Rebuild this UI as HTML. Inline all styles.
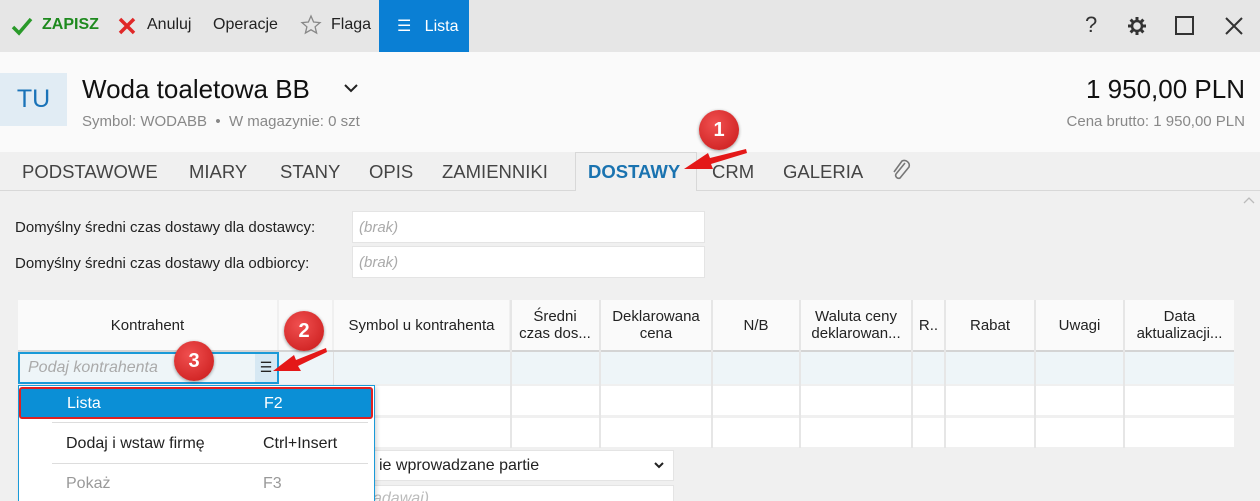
<!DOCTYPE html>
<html><head><meta charset="utf-8"><style>
*{box-sizing:border-box;margin:0;padding:0}
html{width:1260px;height:501px;overflow:hidden}
body{width:1260px;height:501px;overflow:hidden;background:#f0f0f0;font-family:"Liberation Sans",sans-serif;position:relative;color:#222}
.a{position:absolute}
.top{left:0;top:0;width:1260px;height:52px;background:#e6e6e6}
.t{font-size:16px;top:16px}
.hdr{left:0;top:52px;width:1260px;height:100px;background:#fafafa}
.tab{font-size:18.5px;top:161px;color:#444}
.cell{position:absolute;background:#fff}
.hc{position:absolute;background:#fafafa;font-size:15px;text-align:center;display:flex;align-items:center;justify-content:center;line-height:17px;top:300px;height:50px}
.badge{position:absolute;width:40px;height:40px;border-radius:50%;background:radial-gradient(circle at 40% 35%,#f05050,#c81818);color:#fff;font-size:20px;display:flex;align-items:center;justify-content:center;box-shadow:0 1px 3px rgba(0,0,0,.4);font-weight:bold}
</style></head><body>
<div class="a top"></div>
<svg class="a" style="left:10px;top:15px" width="24" height="22"><path d="M3 12l6 6L21 4" stroke="#2a9a2a" stroke-width="3.5" fill="none"/></svg>
<div class="a t" style="left:42px;color:#1e8a1e;font-weight:bold">ZAPISZ</div>
<svg class="a" style="left:117px;top:16px" width="20" height="20"><path d="M3 3L17 17M17 3L3 17" stroke="#e02828" stroke-width="3.5"/></svg>
<div class="a t" style="left:147px">Anuluj</div>
<div class="a t" style="left:213px">Operacje</div>
<svg class="a" style="left:300px;top:14px" width="22" height="22"><path d="M11 2l2.6 6 6.4.6-4.9 4.2 1.5 6.3L11 15.8 5.4 19.1l1.5-6.3L2 8.6 8.4 8z" stroke="#888" stroke-width="1.3" fill="none"/></svg>
<div class="a t" style="left:331px">Flaga</div>
<div class="a" style="left:379px;top:0;width:90px;height:52px;background:#0a7fd4"></div>
<div class="a t" style="left:397px;color:#fff">☰&nbsp;&nbsp;&nbsp;Lista</div>
<div class="a" style="left:1085px;top:12px;font-size:22px;color:#333">?</div>
<svg class="a" style="left:1126px;top:15px" width="22" height="22"><g stroke="#333" stroke-width="3"><path d="M11 2v4M11 16v4M2 11h4M16 11h4M4.6 4.6l2.8 2.8M14.6 14.6l2.8 2.8M4.6 17.4l2.8-2.8M14.6 7.4l2.8-2.8"/></g><circle cx="11" cy="11" r="5" stroke="#333" stroke-width="2.5" fill="none"/></svg>
<div class="a" style="left:1175px;top:16px;width:19px;height:19px;border:2px solid #333"></div>
<svg class="a" style="left:1224px;top:16px" width="20" height="20"><path d="M2 2L18 18M18 2L2 18" stroke="#333" stroke-width="2"/></svg>

<div class="a hdr"></div>
<div class="a" style="left:0;top:73px;width:67px;height:53px;background:#e1ecf4;color:#1a73b8;font-size:25px;display:flex;align-items:center;justify-content:center">TU</div>
<div class="a" style="left:82px;top:74px;font-size:26px;color:#111">Woda toaletowa BB</div>
<svg class="a" style="left:343px;top:82px" width="16" height="12"><path d="M2 3l6 6 6-6" stroke="#222" stroke-width="2" fill="none"/></svg>
<div class="a" style="left:82px;top:113px;font-size:15px;color:#888">Symbol: WODABB &nbsp;•&nbsp; W magazynie: 0 szt</div>
<div class="a" style="right:15px;top:74px;font-size:26px;color:#111">1 950,00 PLN</div>
<div class="a" style="right:15px;top:113px;font-size:15px;color:#888">Cena brutto: 1 950,00 PLN</div>

<div class="a" style="left:0;top:190px;width:1260px;height:1px;background:#d8d8d8"></div>
<div class="a" style="left:575px;top:152px;width:122px;height:39px;background:#f0f0f0;border:1px solid #d8d8d8;border-bottom:none"></div>
<div class="a tab" style="left:22px">PODSTAWOWE</div>
<div class="a tab" style="left:189px">MIARY</div>
<div class="a tab" style="left:280px">STANY</div>
<div class="a tab" style="left:369px">OPIS</div>
<div class="a tab" style="left:442px">ZAMIENNIKI</div>
<div class="a tab" style="left:588px;color:#1a73b0;font-weight:bold">DOSTAWY</div>
<div class="a tab" style="left:712px">CRM</div>
<div class="a tab" style="left:783px">GALERIA</div>
<svg class="a" style="left:888px;top:158px" width="26" height="26"><path d="M17 5L8 16a3 3 0 0 0 4 4l9-11a5 5 0 0 0-7-6L6 14" stroke="#777" stroke-width="1.6" fill="none"/></svg>
<svg class="a" style="left:1242px;top:196px" width="14" height="10"><path d="M2 7l5-5 5 5" stroke="#bbb" stroke-width="1.3" fill="none"/></svg>

<div class="a" style="left:15px;top:219px;font-size:15px">Domyślny średni czas dostawy dla dostawcy:</div>
<div class="a" style="left:352px;top:211px;width:353px;height:32px;background:#fff;border:1px solid #e4e4e4;padding:7px 6px;font-size:15px;color:#aaa;font-style:italic">(brak)</div>
<div class="a" style="left:15px;top:255px;font-size:15px">Domyślny średni czas dostawy dla odbiorcy:</div>
<div class="a" style="left:352px;top:246px;width:353px;height:32px;background:#fff;border:1px solid #e4e4e4;padding:7px 6px;font-size:15px;color:#aaa;font-style:italic">(brak)</div>

<div class="hc" style="left:18px;width:259px">Kontrahent</div>
<div class="hc" style="left:279px;width:53px;color:#999">Typ</div>
<div class="hc" style="left:334px;width:175px">Symbol u kontrahenta</div>
<div class="hc" style="left:511px;width:88px">Średni<br>czas dos...</div>
<div class="hc" style="left:601px;width:110px">Deklarowana<br>cena</div>
<div class="hc" style="left:713px;width:86px">N/B</div>
<div class="hc" style="left:801px;width:110px">Waluta ceny<br>deklarowan...</div>
<div class="hc" style="left:913px;width:31px">R..</div>
<div class="hc" style="left:946px;width:88px">Rabat</div>
<div class="hc" style="left:1036px;width:87px">Uwagi</div>
<div class="hc" style="left:1125px;width:109px">Data<br>aktualizacji...</div>
<div class="a" style="left:18px;top:350px;width:1216px;height:2px;background:#d4d4d4"></div>
<div class="a" style="left:18px;top:352px;width:1216px;height:32px;background:#eef5f8"></div>
<div class="a" style="left:333px;top:352px;width:1px;height:96px;background:#e0e0e0"></div>
<div class="cell" style="left:333px;top:386px;width:901px;height:29px"></div>
<div class="cell" style="left:333px;top:418px;width:901px;height:29px"></div>
<div class="a" style="left:510px;top:300px;width:2px;height:148px;background:#e6e6e6"></div>
<div class="a" style="left:599px;top:300px;width:2px;height:148px;background:#e6e6e6"></div>
<div class="a" style="left:711px;top:300px;width:2px;height:148px;background:#e6e6e6"></div>
<div class="a" style="left:799px;top:300px;width:2px;height:148px;background:#e6e6e6"></div>
<div class="a" style="left:911px;top:300px;width:2px;height:148px;background:#e6e6e6"></div>
<div class="a" style="left:944px;top:300px;width:2px;height:148px;background:#e6e6e6"></div>
<div class="a" style="left:1034px;top:300px;width:2px;height:148px;background:#e6e6e6"></div>
<div class="a" style="left:1123px;top:300px;width:2px;height:148px;background:#e6e6e6"></div>

<div class="a" style="left:18px;top:352px;width:261px;height:32px;border:2px solid #1a9ad8;background:#eef5f8;padding:5px 8px;font-size:16px;color:#aaa;font-style:italic">Podaj kontrahenta</div>
<div class="a" style="left:255px;top:354px;width:22px;height:28px;background:#d6e8f3;font-size:14px;text-align:center;padding-top:5px">☰</div>

<div class="a" style="left:368px;top:450px;width:306px;height:31px;background:#fff;border:1px solid #e4e4e4;font-size:16px;padding:6px 0 0 10px">ie wprowadzane partie</div>
<svg class="a" style="left:653px;top:461px" width="12" height="9"><path d="M2 2l4 4 4-4" stroke="#222" stroke-width="2" fill="none"/></svg>
<div class="a" style="left:368px;top:485px;width:306px;height:31px;background:#fff;border:1px solid #e4e4e4;font-size:16px;padding:4px 0 0 4px;color:#bbb;font-style:italic">adawaj)</div>

<div class="a" style="left:18px;top:385px;width:357px;height:130px;background:#fff;border:1px solid #1a9ad8;box-shadow:2px 2px 4px rgba(0,0,0,.15)"></div>
<div class="a" style="left:19px;top:387px;width:354px;height:32px;background:#0b8fd6;border:2px solid #e02020;border-radius:3px;color:#fff;font-size:16px"><span class="a" style="left:46px;top:6px">Lista</span><span class="a" style="left:243px;top:6px">F2</span></div>
<div class="a" style="left:52px;top:422px;width:316px;height:1px;background:#ddd"></div>
<div class="a" style="left:66px;top:435px;font-size:16px">Dodaj i wstaw firmę</div>
<div class="a" style="left:263px;top:435px;font-size:16px">Ctrl+Insert</div>
<div class="a" style="left:52px;top:463px;width:316px;height:1px;background:#ddd"></div>
<div class="a" style="left:66px;top:475px;font-size:16px;color:#999">Pokaż</div>
<div class="a" style="left:263px;top:475px;font-size:16px;color:#999">F3</div>

<svg class="a" style="left:0;top:0" width="1260" height="501">
<path d="M746 149L710 158L708 153L684 169L713 169L711 164L747 153Z" fill="#e41818"/>
<path d="M326 348L296 360L294 355L273 371L301 371L298 366L327 352Z" fill="#e41818"/>
</svg>
<div class="badge" style="left:699px;top:110px">1</div>
<div class="badge" style="left:284px;top:311px">2</div>
<div class="badge" style="left:174px;top:341px">3</div>
</body></html>
